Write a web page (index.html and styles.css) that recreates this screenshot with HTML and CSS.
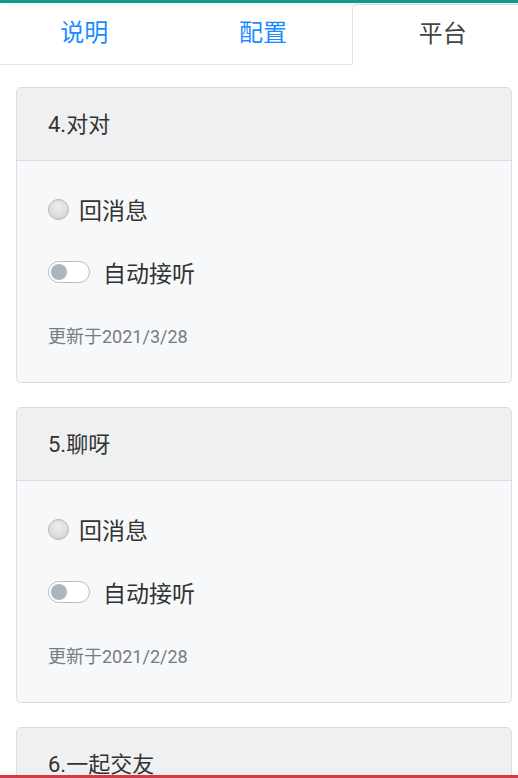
FILE: index.html
```html
<!DOCTYPE html>
<html lang="zh">
<head>
    <meta charset="UTF-8">
    <title>平台</title>
    <link rel="stylesheet" href="styles.css">
</head>
<body>
<div class="topbar"></div>
<div class="tabs-wrap">
    <div class="tabs">
        <div class="tab">说明</div>
        <div class="tab">配置</div>
        <div class="tab active">平台</div>
    </div>
</div>
<div class="list">
    <div class="card">
        <div class="card-head">4.对对</div>
        <div class="card-body">
            <div class="row"><span class="radio"></span>回消息</div>
            <div class="row"><span class="switch"></span>自动接听</div>
            <div class="row date">更新于2021/3/28</div>
        </div>
    </div>
    <div class="card">
        <div class="card-head">5.聊呀</div>
        <div class="card-body">
            <div class="row"><span class="radio"></span>回消息</div>
            <div class="row"><span class="switch"></span>自动接听</div>
            <div class="row date">更新于2021/2/28</div>
        </div>
    </div>
    <div class="card">
        <div class="card-head">6.一起交友</div>
        <div class="card-body">
            <div class="row"><span class="radio"></span>回消息</div>
            <div class="row"><span class="switch"></span>自动接听</div>
            <div class="row date">更新于2021/2/28</div>
        </div>
    </div>
</div>
<div class="bottombar"></div>
</body>
</html>
```

FILE: styles.css
```css
html, body{
    margin: 0;
    padding: 0;
    overflow: hidden;
    background: #fff;
    font-family: Roboto, "Noto Sans CJK SC", sans-serif;
    color: #333;
}
.topbar{
    height: 3px;
    background: #10998a;
    box-shadow: 0 1px 5px rgba(0,0,0,0.12);
    position: relative;
}
.tabs-wrap{
    overflow: hidden;
}
.tabs{
    display: flex;
    margin: 0 -15px 0 -5px;
    height: 62px;
}
.tab{
    flex: 1;
    display: flex;
    align-items: center;
    justify-content: center;
    font-size: 24px;
    color: #1a8cff;
    border-bottom: 1px solid #dfe2e6;
    padding-bottom: 7px;
    box-sizing: border-box;
}
.tab.active{
    color: #444;
    border: 1px solid #dfe2e6;
    border-bottom-color: transparent;
    border-top-left-radius: 5px;
    margin-top: 1px;
    padding-bottom: 6px;
}
.list{
    padding: 22px 0 0 16px;
}
.card{
    width: 494px;
    border: 1px solid #dadde1;
    border-radius: 5px;
    overflow: hidden;
    margin-bottom: 24px;
    background: #f7f8fa;
}
.card-head{
    height: 67px;
    display: flex;
    align-items: center;
    padding: 0 31px 5px;
    font-size: 22px;
    background: #eff0f2;
    border-bottom: 1px solid #dadde1;
}
.card-body{
    padding: 28px 31px 27px;
    display: flex;
    flex-direction: column;
    gap: 23px;
}
.row{
    height: 40px;
    display: flex;
    align-items: center;
    font-size: 23px;
}
.radio{
    width: 19px;
    height: 19px;
    border-radius: 50%;
    border: 1px solid #b5b5b5;
    background: radial-gradient(circle at 50% 35%, #eee, #cfcfcf);
    margin-right: 10px;
}
.switch{
    width: 40px;
    height: 20px;
    border-radius: 11px;
    border: 1px solid #b8bec4;
    background: #fff;
    margin-right: 13px;
    position: relative;
}
.switch::after{
    content: "";
    position: absolute;
    left: 2px;
    top: 2px;
    width: 16px;
    height: 16px;
    border-radius: 50%;
    background: #adb5bd;
}
.date{
    font-size: 18px;
    color: #757c84;
}
.bottombar{
    position: fixed;
    left: 0;
    right: 0;
    bottom: 0;
    height: 3px;
    background: #dc3545;
}
```
